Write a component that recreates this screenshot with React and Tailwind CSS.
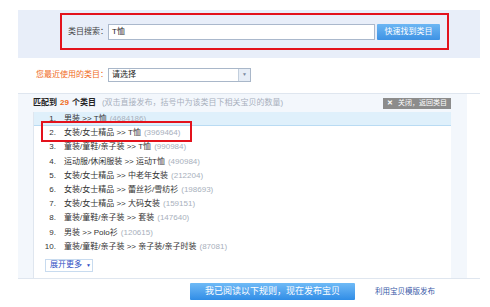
import React from "react";

const rows = [
  { path: "男装 >> T恤", count: "4684186" },
  { path: "女装/女士精品 >> T恤", count: "3969464" },
  { path: "童装/童鞋/亲子装 >> T恤", count: "990984" },
  { path: "运动服/休闲服装 >> 运动T恤", count: "490984" },
  { path: "女装/女士精品 >> 中老年女装", count: "212204" },
  { path: "女装/女士精品 >> 蕾丝衫/雪纺衫", count: "198693" },
  { path: "女装/女士精品 >> 大码女装", count: "159151" },
  { path: "童装/童鞋/亲子装 >> 套装", count: "147640" },
  { path: "男装 >> Polo衫", count: "120615" },
  { path: "童装/童鞋/亲子装 >> 亲子装/亲子时装", count: "87081" },
];

export default function App() {
  return (
    <div className="w-[490px] h-[307px] bg-white overflow-hidden pt-[10px] font-['Liberation_Sans','Noto_Sans_CJK_SC',sans-serif] text-[8px] text-[#333]">
      {/* 搜索区 */}
      <div className="ml-[18px] w-[462px] h-[48px] bg-[#e8eef9] pt-[3px] pl-[42px]">
        <div className="w-[389px] h-[37px] border-2 border-[#e3121c] flex items-center pl-[6px]">
          <span className="w-[40px] text-[#444]">类目搜索：</span>
          <div className="w-[267px] h-[16px] border border-[#aab8cc] bg-white flex items-center pl-[3px] text-[#222]">
            T恤
          </div>
          <button className="ml-[2px] w-[63px] h-[16px] bg-gradient-to-b from-[#6cb6f3] to-[#3d92e4] text-white text-[8px] rounded-[1px]">
            快速找到类目
          </button>
        </div>
      </div>

      {/* 最近使用 */}
      <div className="mt-[10px] h-[14px] flex items-center">
        <span className="ml-[36px] w-[72px] text-[#f06a1a]">您最近使用的类目：</span>
        <div className="w-[143px] h-[14px] border border-[#a9b7c9] bg-white flex items-center justify-between pl-[3px]">
          <span className="text-[#222]">请选择</span>
          <div className="w-[12px] h-full bg-[#e6edf6] border-l border-[#c3cfdd] flex items-center justify-center">
            <span className="text-[5px] text-[#7a8aa0]">▼</span>
          </div>
        </div>
      </div>

      {/* 匹配结果 */}
      <div className="mt-[11px] ml-[18px] w-[462px] h-[186px] border-y border-[#dfe6ef] flex">
        <div className="w-[449px] bg-[#f3f7fc] flex flex-col pr-[16px]">
          <div className="h-[18px] flex items-center justify-between pl-[15px]">
            <div className="flex items-center">
              <span className="font-bold text-[#222]">匹配到</span>
              <span className="font-bold text-[#f06a1a] mx-[3px]">29</span>
              <span className="font-bold text-[#222]">个类目</span>
              <span className="ml-[6px] text-[#a8b0bc]">(双击直接发布，括号中为该类目下相关宝贝的数量)</span>
            </div>
            <div className="w-[68px] h-[11px] bg-[#8c8c8c] text-white text-[7px] flex items-center pl-[4px]">
              <span className="font-bold mr-[5px]">✕</span>
              <span>关闭，返回类目</span>
            </div>
          </div>
          <div className="ml-[15px] flex-1 bg-white border-l border-[#dfe6ef] flex flex-col">
            {rows.map((r, i) => (
              <div
                key={i}
                className={
                  i === 0
                    ? "relative h-[14.2px] flex items-center bg-[#dff0fb] border-b border-[#b9dbf3]"
                    : "relative h-[14.2px] flex items-center"
                }
              >
                <span className="w-[22px] text-right">{i + 1}.</span>
                <span className="ml-[8px]">{r.path}</span>
                <span className="ml-[3px] text-[#a8b0bc]">({r.count})</span>
                {i === 1 && (
                  <div className="absolute left-[7px] top-[-5px] w-[151px] h-[21px] border-2 border-[#e3121c]" />
                )}
              </div>
            ))}
            <div className="mt-[5px] ml-[11px] w-[48px] h-[13px] border border-[#c8dbef] flex items-center pl-[4px] text-[#2f4fc4]">
              展开更多
              <span className="ml-[4px] text-[5px]">▼</span>
            </div>
          </div>
        </div>
      </div>

      {/* 底部按钮 */}
      <div className="mt-[4px] flex items-center">
        <button className="ml-[190px] w-[165px] h-[17px] bg-gradient-to-b from-[#6fbaf6] to-[#2f8de6] text-white text-[9px] rounded-[1px]">
          我已阅读以下规则，现在发布宝贝
        </button>
        <span className="ml-[20px] text-[7.5px] text-[#3b5aa8]">利用宝贝模版发布</span>
      </div>
    </div>
  );
}
